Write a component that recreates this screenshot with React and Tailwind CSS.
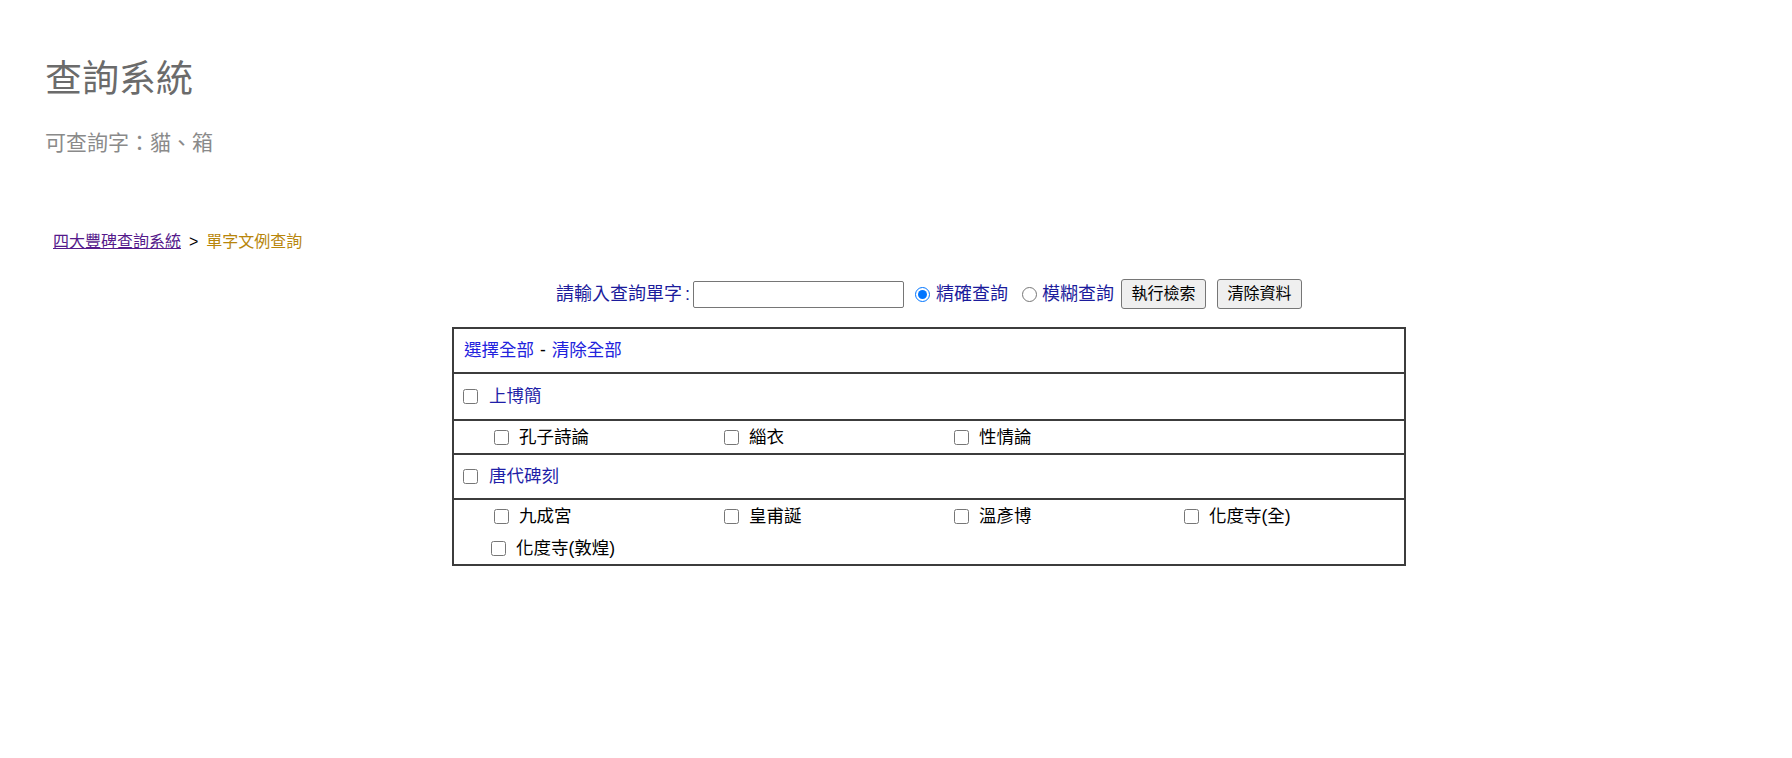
import React from 'react'

const font = { fontFamily: '"Liberation Sans", "Noto Sans CJK TC", sans-serif' }

function Box({ label, className = '' }) {
  return (
    <label className={`inline-flex items-center w-[230px] shrink-0 ${className}`}>
      <input type="checkbox" className="w-[15px] h-[15px] m-0 shrink-0" />
      <span className="ml-[10px] text-black">{label}</span>
    </label>
  )
}

export default function App() {
  return (
    <div className="bg-white pt-[57px] pb-[40px]" style={font}>
      <div className="pl-[45px]">
        <h1 className="text-[37px] leading-[46px] text-[#6b6b6b] font-normal">查詢系統</h1>
        <p className="mt-[25px] text-[21px] leading-[30px] text-[#8a8a8a]">可查詢字：貓、箱</p>
      </div>

      <div className="mt-[74px] pl-[53px] text-[16px] leading-[20px]">
        <a href="#" className="text-[#551a8b] underline">四大豐碑查詢系統</a>
        <span className="text-black mx-[8px]">&gt;</span>
        <span className="text-[#b8860b]">單字文例查詢</span>
      </div>

      <div className="ml-[452px] w-[954px]">
        <form className="mt-[27px] h-[30px] flex items-center justify-center text-[18px] text-[#1c1c9c]">
          <span>請輸入查詢單字<span className="mx-[3px]">:</span></span>
          <input type="text" className="w-[211px] h-[27px] border border-[#767676] rounded-[2px] bg-white" />
          <label className="ml-[11px] inline-flex items-center">
            <input type="radio" name="mode" defaultChecked className="w-[15px] h-[15px] m-0" />
            <span className="ml-[6px]">精確查詢</span>
          </label>
          <label className="ml-[14px] inline-flex items-center">
            <input type="radio" name="mode" className="w-[15px] h-[15px] m-0" />
            <span className="ml-[5px]">模糊查詢</span>
          </label>
          <button type="button" className="ml-[7px] w-[85px] h-[30px] bg-[#efefef] border border-[#767676] rounded-[3px] text-[16px] text-black">執行檢索</button>
          <button type="button" className="ml-[11px] w-[85px] h-[30px] bg-[#efefef] border border-[#767676] rounded-[3px] text-[16px] text-black">清除資料</button>
        </form>

        <div className="mt-[18px] border-2 border-[#3c3c3c] text-[17.5px]">
          <div className="h-[43px] flex items-center pl-[10px]">
            <a href="#" className="text-[#2222dd]">選擇全部</a>
            <span className="text-black mx-[6px]">-</span>
            <a href="#" className="text-[#2222dd]">清除全部</a>
          </div>
          <div className="h-[47px] border-t-2 border-[#3c3c3c] flex items-center pl-[9px]">
            <input type="checkbox" className="w-[15px] h-[15px] m-0" />
            <span className="ml-[11px] text-[#1f1fa8]">上博簡</span>
          </div>
          <div className="h-[34px] border-t-2 border-[#3c3c3c] flex items-center pl-[40px]">
            <Box label="孔子詩論" />
            <Box label="緇衣" />
            <Box label="性情論" />
          </div>
          <div className="h-[45px] border-t-2 border-[#3c3c3c] flex items-center pl-[9px]">
            <input type="checkbox" className="w-[15px] h-[15px] m-0" />
            <span className="ml-[11px] text-[#1f1fa8]">唐代碑刻</span>
          </div>
          <div className="border-t-2 border-[#3c3c3c] pl-[37px]">
            <div className="h-[32px] flex items-center pl-[3px]">
              <Box label="九成宮" />
              <Box label="皇甫誕" />
              <Box label="溫彥博" />
              <Box label="化度寺(全)" />
            </div>
            <div className="h-[32px] flex items-center">
              <Box label="化度寺(敦煌)" />
            </div>
          </div>
        </div>
      </div>
    </div>
  )
}
